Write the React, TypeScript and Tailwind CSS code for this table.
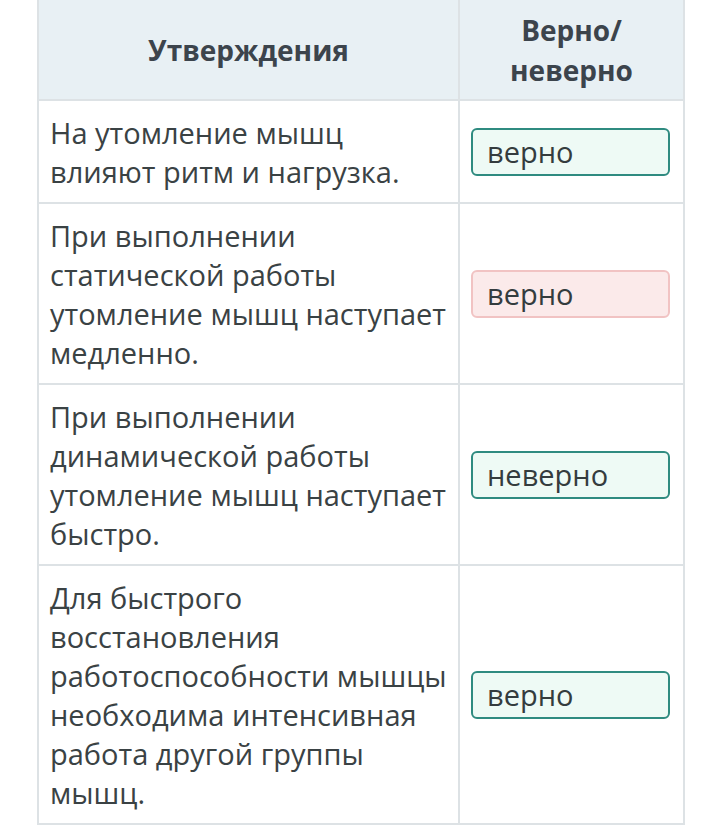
import React from 'react';

type Row = {
  text: string;
  answer: string;
  correct: boolean;
};

const rows: Row[] = [
  { text: 'На утомление мышц влияют ритм и нагрузка.', answer: 'верно', correct: true },
  { text: 'При выполнении статической работы утомление мышц наступает медленно.', answer: 'верно', correct: false },
  { text: 'При выполнении динамической работы утомление мышц наступает быстро.', answer: 'неверно', correct: true },
  {
    text: 'Для быстрого восстановления работоспособности мышцы необходима интенсивная работа другой группы мышц.',
    answer: 'верно',
    correct: true
  }
];

const AnswerBox: React.FC<{ answer: string; correct: boolean }> = ({ answer, correct }) => (
  <div
    className={`h-[48px] w-full rounded-[6px] border-2 px-[14px] flex items-center text-[29px] text-[#343c3e] ${
      correct ? 'border-[#2f8b80] bg-[#eefaf5]' : 'border-[#f1c3c3] bg-[#fbeaea]'
    }`}
  >
    {answer}
  </div>
);

export default function App() {
  return (
    <div className="min-h-[834px] bg-white pl-[37px]" style={{ fontFamily: '"Open Sans", "Noto Sans", sans-serif' }}>
      <table className="w-[646px] border-collapse table-fixed">
        <colgroup>
          <col className="w-[421px]" />
          <col className="w-[225px]" />
        </colgroup>
        <thead>
          <tr className="bg-[#e8f0f4] h-[100px]">
            <th className="border-x-2 border-b-2 border-[#dde2e5] text-[28px] font-bold text-[#3c444c] leading-[40px] text-center align-middle">
              Утверждения
            </th>
            <th className="border-x-2 border-b-2 border-[#dde2e5] text-[28px] font-bold text-[#3c444c] leading-[40px] text-center align-middle">
              Верно/
              <br />
              неверно
            </th>
          </tr>
        </thead>
        <tbody>
          {rows.map((row, i) => (
            <tr key={i}>
              <td className="border-2 border-[#dde2e5] pl-[11px] pr-[8px] pt-[12px] pb-[11px] text-[29px] leading-[39px] text-[#3a4244] align-middle">
                {row.text}
              </td>
              <td className="border-2 border-[#dde2e5] pl-[11px] pr-[13px] align-middle">
                <AnswerBox answer={row.answer} correct={row.correct} />
              </td>
            </tr>
          ))}
        </tbody>
      </table>
    </div>
  );
}
